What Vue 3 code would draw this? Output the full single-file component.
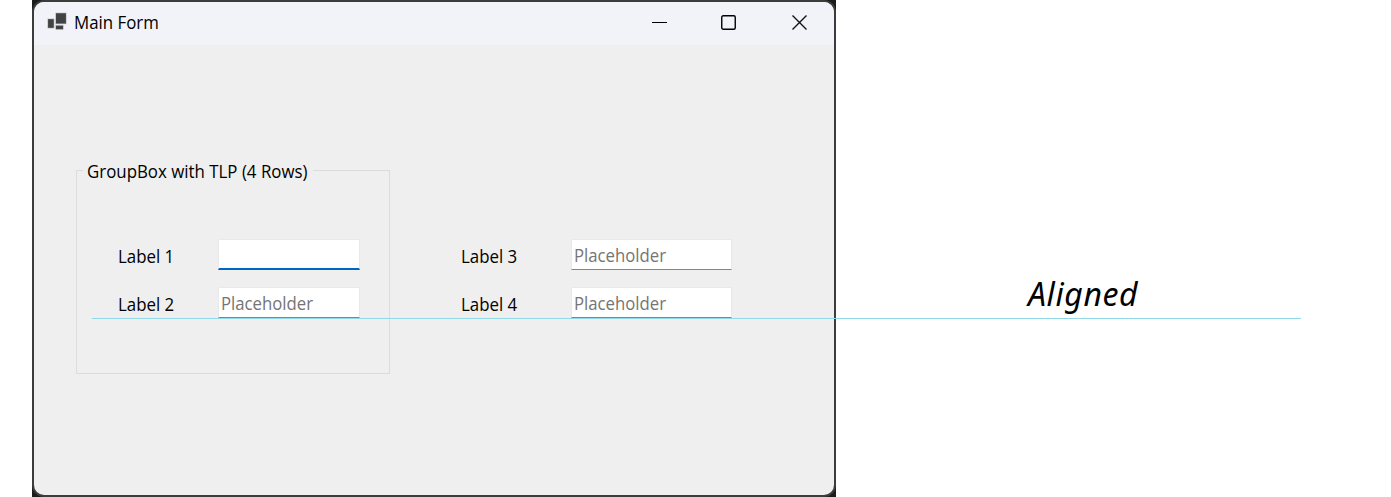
<script setup>
const groupedFields = [
  { label: 'Label 1', placeholder: '', active: true },
  { label: 'Label 2', placeholder: 'Placeholder', active: false },
]
const freeFields = [
  { label: 'Label 3', placeholder: 'Placeholder', active: false },
  { label: 'Label 4', placeholder: 'Placeholder', active: false },
]
</script>

<template>
  <main class="page">
    <section class="frame">
      <div class="window">
        <header class="titlebar">
          <svg class="app-icon" width="20" height="18" viewBox="0 0 20 18">
            <g fill="#424242">
              <rect x="0" y="6" width="6" height="9" />
              <rect x="8" y="0" width="10" height="11" />
              <rect x="8" y="12.4" width="7" height="4" />
            </g>
            <g fill="none" stroke="#b4b4b6" stroke-width="0.6">
              <rect x="-0.2" y="5.9" width="6.2" height="9.2" />
              <rect x="7.7" y="0" width="10.5" height="10.8" />
              <rect x="7.7" y="12.2" width="7.6" height="4.4" />
            </g>
          </svg>
          <span class="title narrow">Main Form</span>
          <div class="controls">
            <svg width="16" height="16" viewBox="0 0 16 16"><path d="M0 7.5H15" stroke="#000" /></svg>
            <svg class="maximize" width="16" height="16" viewBox="0 0 16 16"><rect x="0.75" y="0.75" width="13.5" height="13.5" rx="1.5" fill="none" stroke="#000" stroke-width="1.4" /></svg>
            <svg width="16" height="16" viewBox="0 0 16 16"><path d="M0.5 0.5L14.5 14.5M14.5 0.5L0.5 14.5" stroke="#101018" stroke-width="1.4" /></svg>
          </div>
        </header>
        <div class="body">
          <fieldset class="group">
            <legend><span class="narrow">GroupBox with TLP (4 Rows)</span></legend>
            <div class="fields">
              <div v-for="f in groupedFields" :key="f.label" class="row">
                <span class="label"><span class="narrow">{{ f.label }}</span></span>
                <div class="input" :class="{ active: f.active }">
                  <span class="placeholder narrow">{{ f.placeholder }}</span>
                </div>
              </div>
            </div>
          </fieldset>
          <div class="fields free">
            <div v-for="f in freeFields" :key="f.label" class="row">
              <span class="label"><span class="narrow">{{ f.label }}</span></span>
              <div class="input">
                <span class="placeholder narrow">{{ f.placeholder }}</span>
              </div>
            </div>
          </div>
        </div>
      </div>
    </section>
    <aside class="note">Aligned</aside>
    <div class="guide"></div>
  </main>
</template>

<style>
body {
  background: #fff;
  overflow: hidden;
}
</style>

<style scoped>
.page {
  position: relative;
  display: flex;
  box-sizing: border-box;
  width: 1391px;
  height: 497px;
  padding-left: 32px;
  font-family: 'Open Sans', 'Noto Sans', sans-serif;
  font-size: 18px;
  line-height: 24px;
  color: #000;
}
.narrow {
  display: inline-block;
  white-space: nowrap;
  transform: scaleX(0.937);
  transform-origin: left center;
}
.frame {
  box-sizing: border-box;
  width: 804px;
  height: 497px;
  background: #1b1b1b;
  overflow: hidden;
}
.window {
  box-sizing: border-box;
  height: 497px;
  border: 2px solid #3c3c3c;
  border-radius: 12px;
  background: #efefef;
  overflow: hidden;
}
.titlebar {
  display: flex;
  align-items: flex-start;
  box-sizing: border-box;
  height: 43px;
  padding: 8px 27px 0 14px;
  background: #f1f3f9;
}
.app-icon {
  margin-top: 3px;
  overflow: visible;
}
.title {
  margin-left: 6px;
}
.controls {
  display: flex;
  gap: 54px;
  margin: 5px -1px 0 auto;
}
.controls svg {
  display: block;
}
.controls .maximize {
  margin: 0 1px 0 -1px;
}
.body {
  display: flex;
  padding: 113px 0 0 42px;
}
.group {
  box-sizing: border-box;
  width: 314px;
  height: 216px;
  min-width: 0;
  margin: 0;
  padding: 0;
  border: 1px solid #dcdcdc;
}
legend {
  box-sizing: border-box;
  width: 230px;
  height: 24px;
  margin-left: 6px;
  padding: 1px 0 0 4px;
}
.fields {
  display: flex;
  flex-direction: column;
  gap: 17px;
  padding: 57px 0 0 41px;
}
.free {
  padding: 81px 0 0 71px;
}
.row {
  display: flex;
  align-items: center;
  height: 31px;
}
.label {
  width: 100px;
  padding-top: 2px;
}
.free .label {
  width: 110px;
}
.input {
  display: flex;
  align-items: center;
  box-sizing: border-box;
  width: 142px;
  height: 31px;
  padding: 0 2px;
  border: 1px solid #e9e9e9;
  border-bottom: 1px solid #858585;
  background: #fff;
}
.input.active {
  border-bottom: 2px solid #0067c0;
}
.free .input {
  width: 161px;
}
.placeholder {
  color: #757575;
  transform: scaleX(0.93);
}
.note {
  margin: 274px 0 0 192px;
  font-family: 'Noto Sans', 'Open Sans', sans-serif;
  font-size: 32px;
  line-height: 40px;
  font-style: italic;
  letter-spacing: 0.6px;
}
.guide {
  position: absolute;
  top: 318px;
  left: 92px;
  width: 1209px;
  height: 1px;
  background: #91d8e8;
}
</style>
